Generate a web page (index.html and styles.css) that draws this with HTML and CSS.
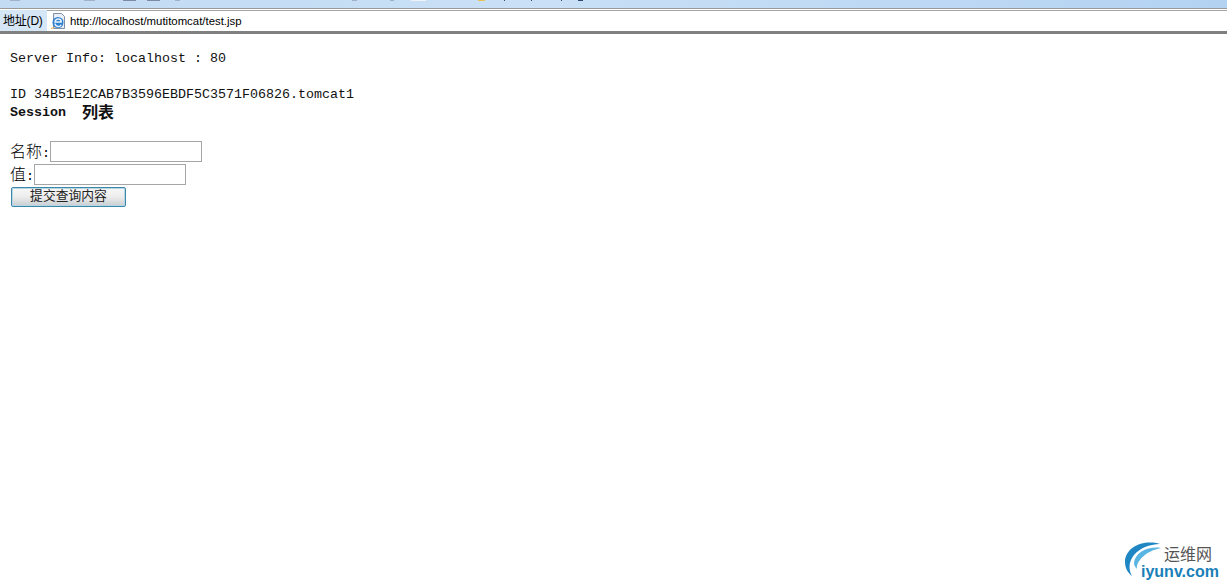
FILE: index.html
```html
<!DOCTYPE html>
<html lang="zh">
<head>
<meta charset="utf-8">
<title>test.jsp</title>
<link rel="stylesheet" href="styles.css">
</head>
<body>
<header class="chrome">
  <div class="toolbar">
    <svg class="toolbar-bits" width="1227" height="8" viewBox="0 0 1227 8">
      <g fill="#a3b1c6">
        <rect x="10" y="0" width="10" height="1"/>
        <rect x="84" y="0" width="11" height="1"/>
        <rect x="175" y="0" width="5" height="1"/>
        <rect x="352" y="0" width="5" height="1"/>
        <rect x="390" y="0" width="4" height="1"/>
      </g>
      <g fill="#7d8aa5">
        <rect x="123" y="0" width="13" height="1"/>
        <rect x="147" y="0" width="13" height="1"/>
      </g>
      <rect x="411" y="0" width="15" height="1" fill="#eef3f8"/>
      <rect x="478" y="0" width="7" height="1" fill="#e8c35a"/>
      <g fill="#33486f">
        <rect x="504" y="0" width="1" height="1"/>
        <rect x="531" y="0" width="1" height="1"/>
        <rect x="561" y="0" width="1" height="1"/>
        <rect x="578" y="0" width="5" height="1"/>
      </g>
    </svg>
  </div>
  <div class="addressbar">
    <span class="addr-label">地址(D)</span>
    <div class="addr-field">
      <svg class="ie-icon" width="17" height="17" viewBox="0 0 17 17">
        <path d="M3.500 .5h8l3 3v12h-11z" fill="#e9eef6" stroke="#7f8ea8"/>
        <path d="M1 15.500c4-1 9-5 12-9" fill="none" stroke="#d9a93c" stroke-width="1"/>
        <circle cx="8" cy="9.500" r="5.500" fill="#2f7fcf"/>
        <path d="M5 9h6.200c0-4-5.700-4-6.200 0zM5 10.500c.5 3.500 5 3.800 6.200 1.300" fill="none" stroke="#e6f2fb" stroke-width="1.500"/>
      </svg>
      <span class="addr-url">http://localhost/mutitomcat/test.jsp</span>
    </div>
  </div>
</header>
<main class="content">
  <p class="mono">Server Info: localhost : 80</p>
  <p class="mono line-id">ID 34B51E2CAB7B3596EBDF5C3571F06826.tomcat1</p>
  <p class="mono heading"><span>Session</span><span class="cjk">列表</span></p>
  <form class="session-form">
    <div class="row"><span class="label">名称<span class="colon">:</span></span><input class="field" type="text"></div>
    <div class="row"><span class="label">值<span class="colon">:</span></span><input class="field" type="text"></div>
    <button class="submit" type="button">提交查询内容</button>
  </form>
</main>
<div class="watermark">
  <svg class="wm-arc" width="42" height="42" viewBox="0 0 42 42">
    <path d="M36 3C20-2 1 6 1 21c0 5 2 10 7 14C4 28 5 20 10 14 16 7 25 3.500 36 3z" fill="#1f86c4"/>
    <path d="M37 7C25 5 11 11 10 22c0 2 1 4 3 6C12 20 22 10 37 7z" fill="#59b6e2"/>
  </svg>
  <div class="wm-text">
    <span class="wm-cn">运维网</span>
    <span class="wm-en">iyunv.com</span>
  </div>
</div>
</body>
</html>
```
FILE: styles.css
```css
html, body { margin: 0; padding: 0; background: #fff; }
body { width: 1227px; height: 588px; overflow: hidden; position: relative; font-family: "Liberation Sans", "Noto Sans CJK SC", sans-serif; color: #000; }
.chrome { display: flex; flex-direction: column; }
.toolbar { height: 8px; background: linear-gradient(90deg, #c3dcf3, #c9e0f6 45%, #b3d2f2); }
.toolbar-bits { display: block; }
.addressbar { display: flex; height: 22px; border-top: 1px solid #9a9a9a; border-bottom: 3px solid #808080; background: #fff; }
.addr-label { width: 47px; box-sizing: border-box; padding: 0 0 0 3px; font-size: 12px; line-height: 22px; background: #d5e6f6; border-top: 1px solid #fff; letter-spacing: -0.2px; }
.addr-field { flex: 1; display: flex; align-items: center; gap: 3px; padding-left: 3px; border-top: 1px solid #a5a5a5; margin-top: 1px; }
.ie-icon { flex: none; }
.addr-url { font-size: 11.400px; }
.content { padding: 16px 0 0 10px; }
.mono { margin: 0; height: 18px; font-family: "Liberation Mono", "Noto Sans CJK SC", monospace; font-size: 13.333px; line-height: 18px; color: #111; white-space: nowrap; }
.line-id { margin-top: 18px; }
.heading { display: flex; align-items: center; gap: 16px; font-weight: 700; }
.cjk { padding-bottom: 4px; font-family: "Noto Sans CJK SC", sans-serif; font-size: 16px; line-height: 16px; }
.session-form { margin: 18px 0 0; display: flex; flex-direction: column; align-items: flex-start; }
.row { display: flex; align-items: center; height: 23px; }
.label { padding-bottom: 4px; font-family: "Noto Sans CJK SC", sans-serif; font-size: 16px; font-weight: 300; }
.colon { font-family: "Liberation Mono", monospace; font-size: 13.333px; }
.field { width: 152px; height: 21px; box-sizing: border-box; border: 1px solid #a5a5a5; background: #fff; padding: 0; margin: 0; }
.submit { width: 115px; height: 20px; margin: 1px 0 0 1px; padding: 0 0 4px; box-sizing: border-box; border: 1px solid #3d88a8; border-radius: 2px; box-shadow: inset 0 0 0 1px #b5d6e2; background: linear-gradient(#f8f8f8, #ececec 50%, #c9ced2); font-family: "Noto Sans CJK SC", sans-serif; font-size: 12.800px; line-height: 14px; color: #222; }
.watermark { position: absolute; left: 1124px; top: 541px; display: flex; }
.wm-arc { position: absolute; left: 0; top: 0; }
.wm-text { display: flex; flex-direction: column; margin-left: 17px; padding-top: 3px; }
.wm-cn { margin-left: 23px; font-family: "Noto Sans CJK SC", sans-serif; font-size: 16px; line-height: 19px; color: #555; }
.wm-en { font-size: 16px; line-height: 18px; font-weight: 700; color: #1a7fb8; }
```
